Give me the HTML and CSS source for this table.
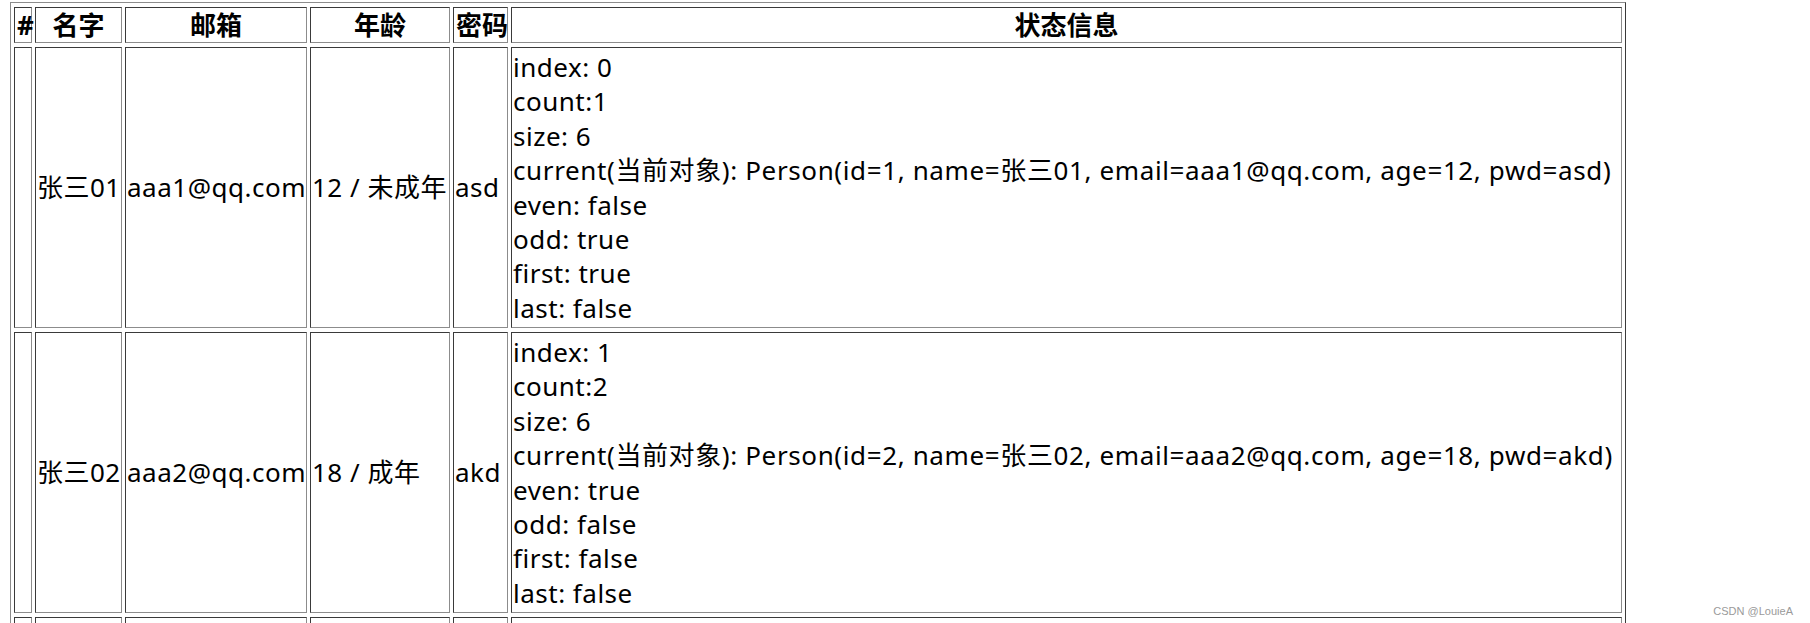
FILE: index.html
```html
<!DOCTYPE html>
<html lang="zh-CN">
<head>
<meta charset="utf-8">
<title>用户列表</title>
<link rel="stylesheet" href="styles.css">
</head>
<body>
<table class="list">
  <thead>
    <tr>
      <th class="c-idx">#</th>
      <th class="c-name">名字</th>
      <th class="c-mail">邮箱</th>
      <th class="c-age">年龄</th>
      <th class="c-pwd">密码</th>
      <th class="c-stat">状态信息</th>
    </tr>
  </thead>
  <tbody>
    <tr>
      <td></td>
      <td>张三01</td>
      <td>aaa1@qq.com</td>
      <td>12 / 未成年</td>
      <td>asd</td>
      <td>
        <div>index: 0</div>
        <div>count:1</div>
        <div>size: 6</div>
        <div class="long">current(当前对象): Person(id=1, name=张三01, email=aaa1@qq.com, age=12, pwd=asd)</div>
        <div>even: false</div>
        <div>odd: true</div>
        <div>first: true</div>
        <div>last: false</div>
      </td>
    </tr>
    <tr>
      <td></td>
      <td>张三02</td>
      <td>aaa2@qq.com</td>
      <td>18 / 成年</td>
      <td>akd</td>
      <td>
        <div>index: 1</div>
        <div>count:2</div>
        <div>size: 6</div>
        <div class="long">current(当前对象): Person(id=2, name=张三02, email=aaa2@qq.com, age=18, pwd=akd)</div>
        <div>even: true</div>
        <div>odd: false</div>
        <div>first: false</div>
        <div>last: false</div>
      </td>
    </tr>
    <tr class="row-more">
      <td></td>
      <td></td>
      <td></td>
      <td></td>
      <td></td>
      <td></td>
    </tr>
  </tbody>
</table>
<span class="watermark">CSDN @LouieA</span>
</body>
</html>
```
FILE: styles.css
```css
html, body {
  margin: 0;
  padding: 0;
  overflow: hidden;
  background: #fff;
}
body {
  font-family: "Noto Sans", "Noto Sans CJK SC", sans-serif;
  color: #000;
  height: 623px;
  position: relative;
}
.list {
  margin: 2px 0 0 10px;
  width: 1616px;
  table-layout: fixed;
  border-collapse: separate;
  border-spacing: 3px 4px;
  border-width: 1px;
  border-style: solid;
  border-color: #8c8c8c #3a3a3a #3a3a3a #8c8c8c;
  font-size: 26px;
}
.list th,
.list td {
  box-sizing: border-box;
  border-width: 1px;
  border-style: solid;
  border-color: #3a3a3a #8c8c8c #8c8c8c #3a3a3a;
  padding: 2px;
}
.list th {
  height: 36px;
  line-height: 30px;
  font-weight: 700;
  text-align: center;
  white-space: nowrap;
}
.list td {
  height: 281px;
  line-height: 34.375px;
  text-align: left;
  vertical-align: middle;
  white-space: nowrap;
  padding-left: 1px;
  letter-spacing: 0.5px;
}
.list td .long {
  letter-spacing: 0.62px;
}
.c-idx { width: 18px; }
.c-name { width: 87px; }
.c-mail { width: 182px; }
.c-age { width: 140px; }
.c-pwd { width: 55px; }
.c-stat { width: 1111px; }
.watermark {
  position: absolute;
  right: 17px;
  bottom: 6px;
  font-family: "Liberation Sans", Arial, sans-serif;
  font-size: 11px;
  color: #9a9a9a;
  line-height: 12px;
}
```
